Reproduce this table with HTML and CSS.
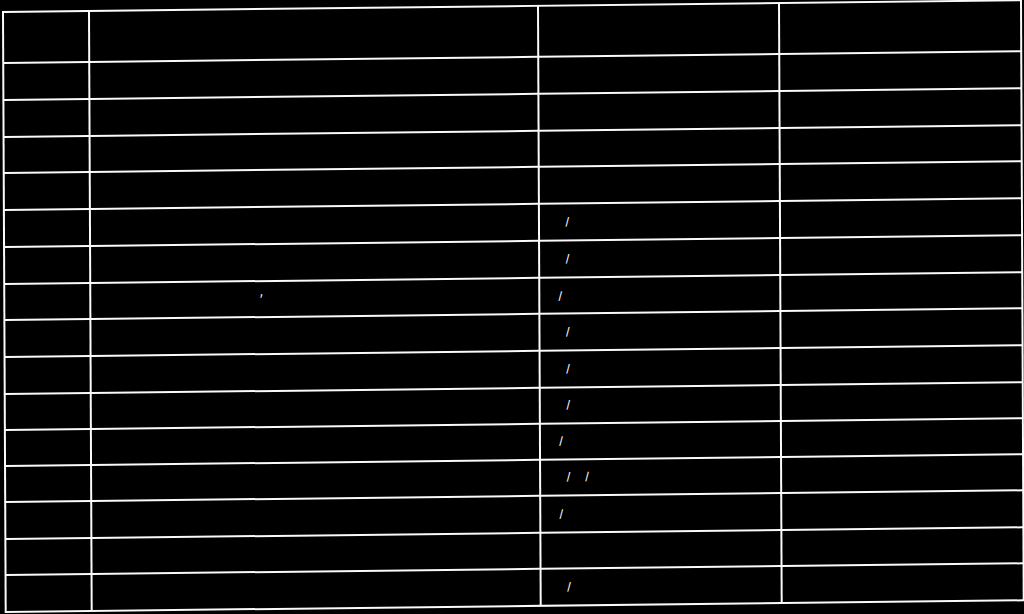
FILE: index.html
```html
<!DOCTYPE html>
<html lang="en">
<head>
<meta charset="utf-8">
<title>Table</title>
<link rel="stylesheet" href="styles.css">
</head>
<body>
<main class="sheet">
  <div class="grid">
    <div class="c"></div><div class="c"></div><div class="c"></div><div class="c"></div>
    <div class="c"></div><div class="c"></div><div class="c"></div><div class="c"></div>
    <div class="c"></div><div class="c"></div><div class="c"></div><div class="c"></div>
    <div class="c"></div><div class="c"></div><div class="c"></div><div class="c"></div>
    <div class="c"></div><div class="c"></div><div class="c"></div><div class="c"></div>
    <div class="c"></div><div class="c"></div><div class="c pa"><span class="mk">/</span></div><div class="c"></div>
    <div class="c"></div><div class="c"></div><div class="c pa"><span class="mk">/</span></div><div class="c"></div>
    <div class="c"></div><div class="c pt"><span class="tick">′</span></div><div class="c pb"><span class="mk">/</span></div><div class="c"></div>
    <div class="c"></div><div class="c"></div><div class="c pa"><span class="mk">/</span></div><div class="c"></div>
    <div class="c"></div><div class="c"></div><div class="c pa"><span class="mk">/</span></div><div class="c"></div>
    <div class="c"></div><div class="c"></div><div class="c pa"><span class="mk">/</span></div><div class="c"></div>
    <div class="c"></div><div class="c"></div><div class="c pb"><span class="mk">/</span></div><div class="c"></div>
    <div class="c"></div><div class="c"></div><div class="c pa"><span class="mk">/</span><span class="mk">/</span></div><div class="c"></div>
    <div class="c"></div><div class="c"></div><div class="c pb"><span class="mk">/</span></div><div class="c"></div>
    <div class="c"></div><div class="c"></div><div class="c"></div><div class="c"></div>
    <div class="c"></div><div class="c"></div><div class="c pa"><span class="mk">/</span></div><div class="c"></div>
  </div>
</main>
</body>
</html>
```

FILE: styles.css
```css
html,
body {
  margin: 0;
  height: 100%;
  background: #000;
  overflow: hidden;
}

body {
  font-family: "Liberation Sans", Arial, sans-serif;
  color: #fff;
  -webkit-font-smoothing: antialiased;
}

.sheet {
  padding: 11.2px 0 0 1.7px;
}

.grid {
  display: grid;
  width: max-content;
  grid-template-columns: 83.6px 447px 239px 240px;
  grid-template-rows: 48.5px 35px 35px 34.5px 35px 35px 35px 34px 34.5px 35px 34.5px 33.5px 34.5px 35px 34px 35px;
  gap: 2px;
  padding: 2px;
  background: #fafafa;
  transform-origin: 1px 1px;
  transform: matrix(1, -0.0115, 0.0045, 1, 0, 0);
}

.c {
  background: #000;
  display: flex;
  align-items: center;
  font-size: 13px;
  line-height: 1;
}

.pa {
  padding-left: 26px;
}

.pb {
  padding-left: 18.6px;
}

.pt {
  padding-left: 169px;
}

.mk {
  color: #fff;
}

.mk + .mk {
  margin-left: 15px;
}

.tick {
  font-size: 14px;
  color: #fff;
}
```
